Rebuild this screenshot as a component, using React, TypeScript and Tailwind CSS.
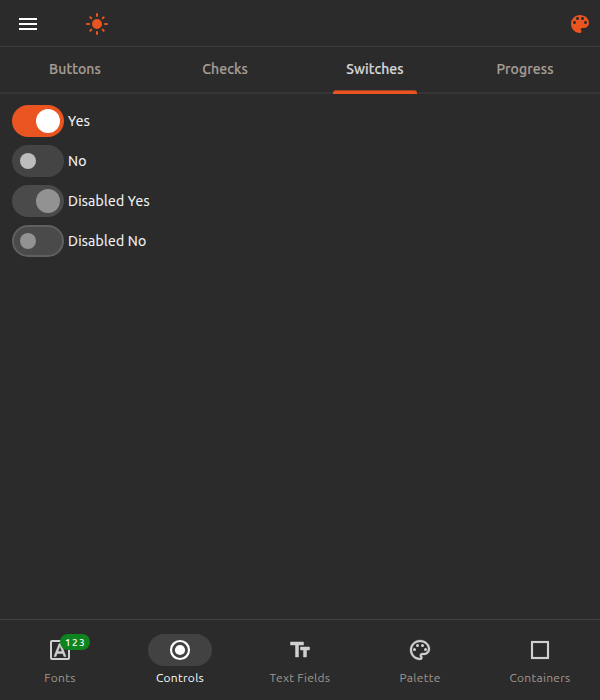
import type { ReactNode } from 'react';

const PALETTE =
  'M12 3c-4.97 0-9 4.03-9 9s4.03 9 9 9c.83 0 1.5-.67 1.5-1.5 0-.39-.15-.74-.39-1.01-.23-.26-.38-.61-.38-.99 0-.83.67-1.5 1.5-1.5H16c2.76 0 5-2.24 5-5 0-4.42-4.03-8-9-8zm-5.5 9c-.83 0-1.5-.67-1.5-1.5S5.67 9 6.5 9 8 9.67 8 10.5 7.33 12 6.5 12zm3-4C8.67 8 8 7.33 8 6.5S8.67 5 9.5 5s1.5.67 1.5 1.5S10.33 8 9.5 8zm5 0c-.83 0-1.5-.67-1.5-1.5S13.67 5 14.5 5s1.5.67 1.5 1.5S15.33 8 14.5 8zm3 4c-.83 0-1.5-.67-1.5-1.5S16.67 9 17.5 9s1.5.67 1.5 1.5-.67 1.5-1.5 1.5z';

function Icon({ children, className = '' }: { children: ReactNode; className?: string }) {
  return (
    <svg viewBox="0 0 24 24" fill="currentColor" className={`block size-6 shrink-0 ${className}`}>
      {children}
    </svg>
  );
}

function Sun() {
  return (
    <Icon>
      <circle cx="12" cy="12" r="5" />
      <path
        d="M12 2v2M12 20v2M2 12h2M20 12h2M5.3 5.3l1.05 1.05M17.65 17.65l1.05 1.05M18.7 5.3l-1.05 1.05M6.35 17.65L5.3 18.7"
        stroke="currentColor"
        strokeWidth="2"
        strokeLinecap="round"
      />
    </Icon>
  );
}

const tabs = ['Buttons', 'Checks', 'Switches', 'Progress'];

const switches = [
  { label: 'Yes', on: true, box: 'bg-[#e95420]', thumb: 'bg-white' },
  { label: 'No', on: false, box: 'bg-[#444444]', thumb: 'bg-[#bcbcbc]' },
  { label: 'Disabled Yes', on: true, box: 'bg-[#4a4a4a]', thumb: 'bg-[#929292]' },
  { label: 'Disabled No', on: false, box: 'bg-[#4a4a4a] border-2 border-[#606060]', thumb: 'bg-[#929292]' },
];

const destinations = [
  {
    label: 'Fonts',
    badge: '123',
    icon: (
      <Icon>
        <path d="M4 2h16a2 2 0 0 1 2 2v16a2 2 0 0 1-2 2H4a2 2 0 0 1-2-2V4a2 2 0 0 1 2-2zm0 2v16h16V4z" fillRule="evenodd" />
        <path
          d="M9.17 15.5h5.64l1.14 3h2.09l-5.11-13h-1.86l-5.11 13h2.09l1.12-3zM12 7.98l2.07 5.52H9.93L12 7.98z"
          fillRule="evenodd"
          stroke="currentColor"
          strokeWidth="0.5"
        />
      </Icon>
    ),
  },
  {
    label: 'Controls',
    active: true,
    icon: (
      <Icon>
        <circle cx="12" cy="12" r="9" fill="none" stroke="currentColor" strokeWidth="2.2" />
        <circle cx="12" cy="12" r="5.1" />
      </Icon>
    ),
  },
  {
    label: 'Text Fields',
    icon: (
      <Icon>
        <path d="M2.5 4v3h5v12h3V7h5V4h-13zm19 5h-9v3h3v7h3v-7h3V9z" stroke="currentColor" strokeWidth="0.5" />
      </Icon>
    ),
  },
  {
    label: 'Palette',
    icon: (
      <Icon>
        <path d="M12 22C6.49 22 2 17.51 2 12S6.49 2 12 2s10 4.04 10 9c0 3.31-2.69 6-6 6h-1.77c-.28 0-.5.22-.5.5 0 .12.05.23.13.33.41.47.64 1.06.64 1.67A2.5 2.5 0 0 1 12 22zm0-18c-4.41 0-8 3.59-8 8s3.59 8 8 8c.28 0 .5-.22.5-.5a.54.54 0 0 0-.14-.35c-.41-.46-.63-1.05-.63-1.65a2.5 2.5 0 0 1 2.5-2.5H16c2.21 0 4-1.79 4-4 0-3.86-3.59-7-8-7z" stroke="currentColor" strokeWidth="0.3" />
        <circle cx="6.5" cy="11.5" r="1.5" />
        <circle cx="9.5" cy="7.5" r="1.5" />
        <circle cx="14.5" cy="7.5" r="1.5" />
        <circle cx="17.5" cy="11.5" r="1.5" />
      </Icon>
    ),
  },
  {
    label: 'Containers',
    icon: (
      <Icon>
        <path d="M3 3v18h18V3H3zm16 16H5V5h14v14z" stroke="currentColor" strokeWidth="0.15" />
      </Icon>
    ),
  },
];

export default function App() {
  return (
    <div className="flex h-[700px] w-[600px] flex-col overflow-hidden bg-[#2b2b2b] font-['Ubuntu','Noto_Sans',sans-serif]">
      <header className="flex h-[47px] shrink-0 items-center border-b border-[#3d3d3d] pt-px pr-2 pl-4">
        <Icon className="text-white">
          <path d="M3 18h18v-2H3v2zm0-5h18v-2H3v2zm0-7v2h18V6H3z" />
        </Icon>
        <div className="ml-[45px] text-[#e95420]">
          <Sun />
        </div>
        <Icon className="ml-auto text-[#e95420]">
          <path d={PALETTE} />
        </Icon>
      </header>

      <nav className="flex h-[47px] shrink-0 border-b-2 border-[#353535] text-sm leading-5 font-medium">
        {tabs.map((t) => (
          <div
            key={t}
            className={`relative flex flex-1 items-center justify-center pb-0.5 tracking-[0.1px] [-webkit-text-stroke:0.2px] ${
              t === 'Switches' ? 'text-[#d5d5d5]' : 'text-[#a59d95]'
            }`}
          >
            {t}
            {t === 'Switches' && (
              <span className="absolute -bottom-0.5 left-[33px] h-1 w-[84px] rounded-t-[3px] border-t border-[#a24024] bg-[#e95420]" />
            )}
          </div>
        ))}
      </nav>

      <main className="flex flex-1 flex-col gap-2 px-3 pt-[11px]">
        {switches.map((s) => (
          <div key={s.label} className="flex h-8 items-center gap-1">
            <div className={`flex h-8 w-[52px] items-center rounded-full ${s.box} ${s.on ? 'justify-end pr-1' : s.label === 'No' ? 'pl-2' : 'pl-1.5'}`}>
              <span className={`rounded-full ${s.on ? 'size-6' : 'size-4'} ${s.thumb}`} />
            </div>
            <span className="text-sm leading-5 tracking-[0.25px] text-[#f7f7f7] [-webkit-text-stroke:0.15px]">{s.label}</span>
          </div>
        ))}
      </main>

      <footer className="flex h-[81px] shrink-0 border-t border-[#424242]">
        {destinations.map((d) => (
          <div
            key={d.label}
            className={`flex flex-1 flex-col items-center pt-3.5 ${d.active ? 'text-white' : 'text-[#d0d0d0]'}`}
          >
            <div className={`relative flex h-8 w-16 items-center justify-center rounded-full ${d.active ? 'bg-[#424242]' : ''}`}>
              {d.icon}
              {d.badge && (
                <span className="absolute top-0 left-8 flex h-4 w-[30px] items-center justify-center rounded-full bg-[#0e8420] pt-px pl-px text-[10px] leading-4 font-medium tracking-[1.3px] text-white">
                  {d.badge}
                </span>
              )}
            </div>
            <span className={`mt-1 text-xs leading-4 tracking-[0.3px] ${d.active ? 'text-white' : 'text-[#a09890]'}`}>{d.label}</span>
          </div>
        ))}
      </footer>
    </div>
  );
}
